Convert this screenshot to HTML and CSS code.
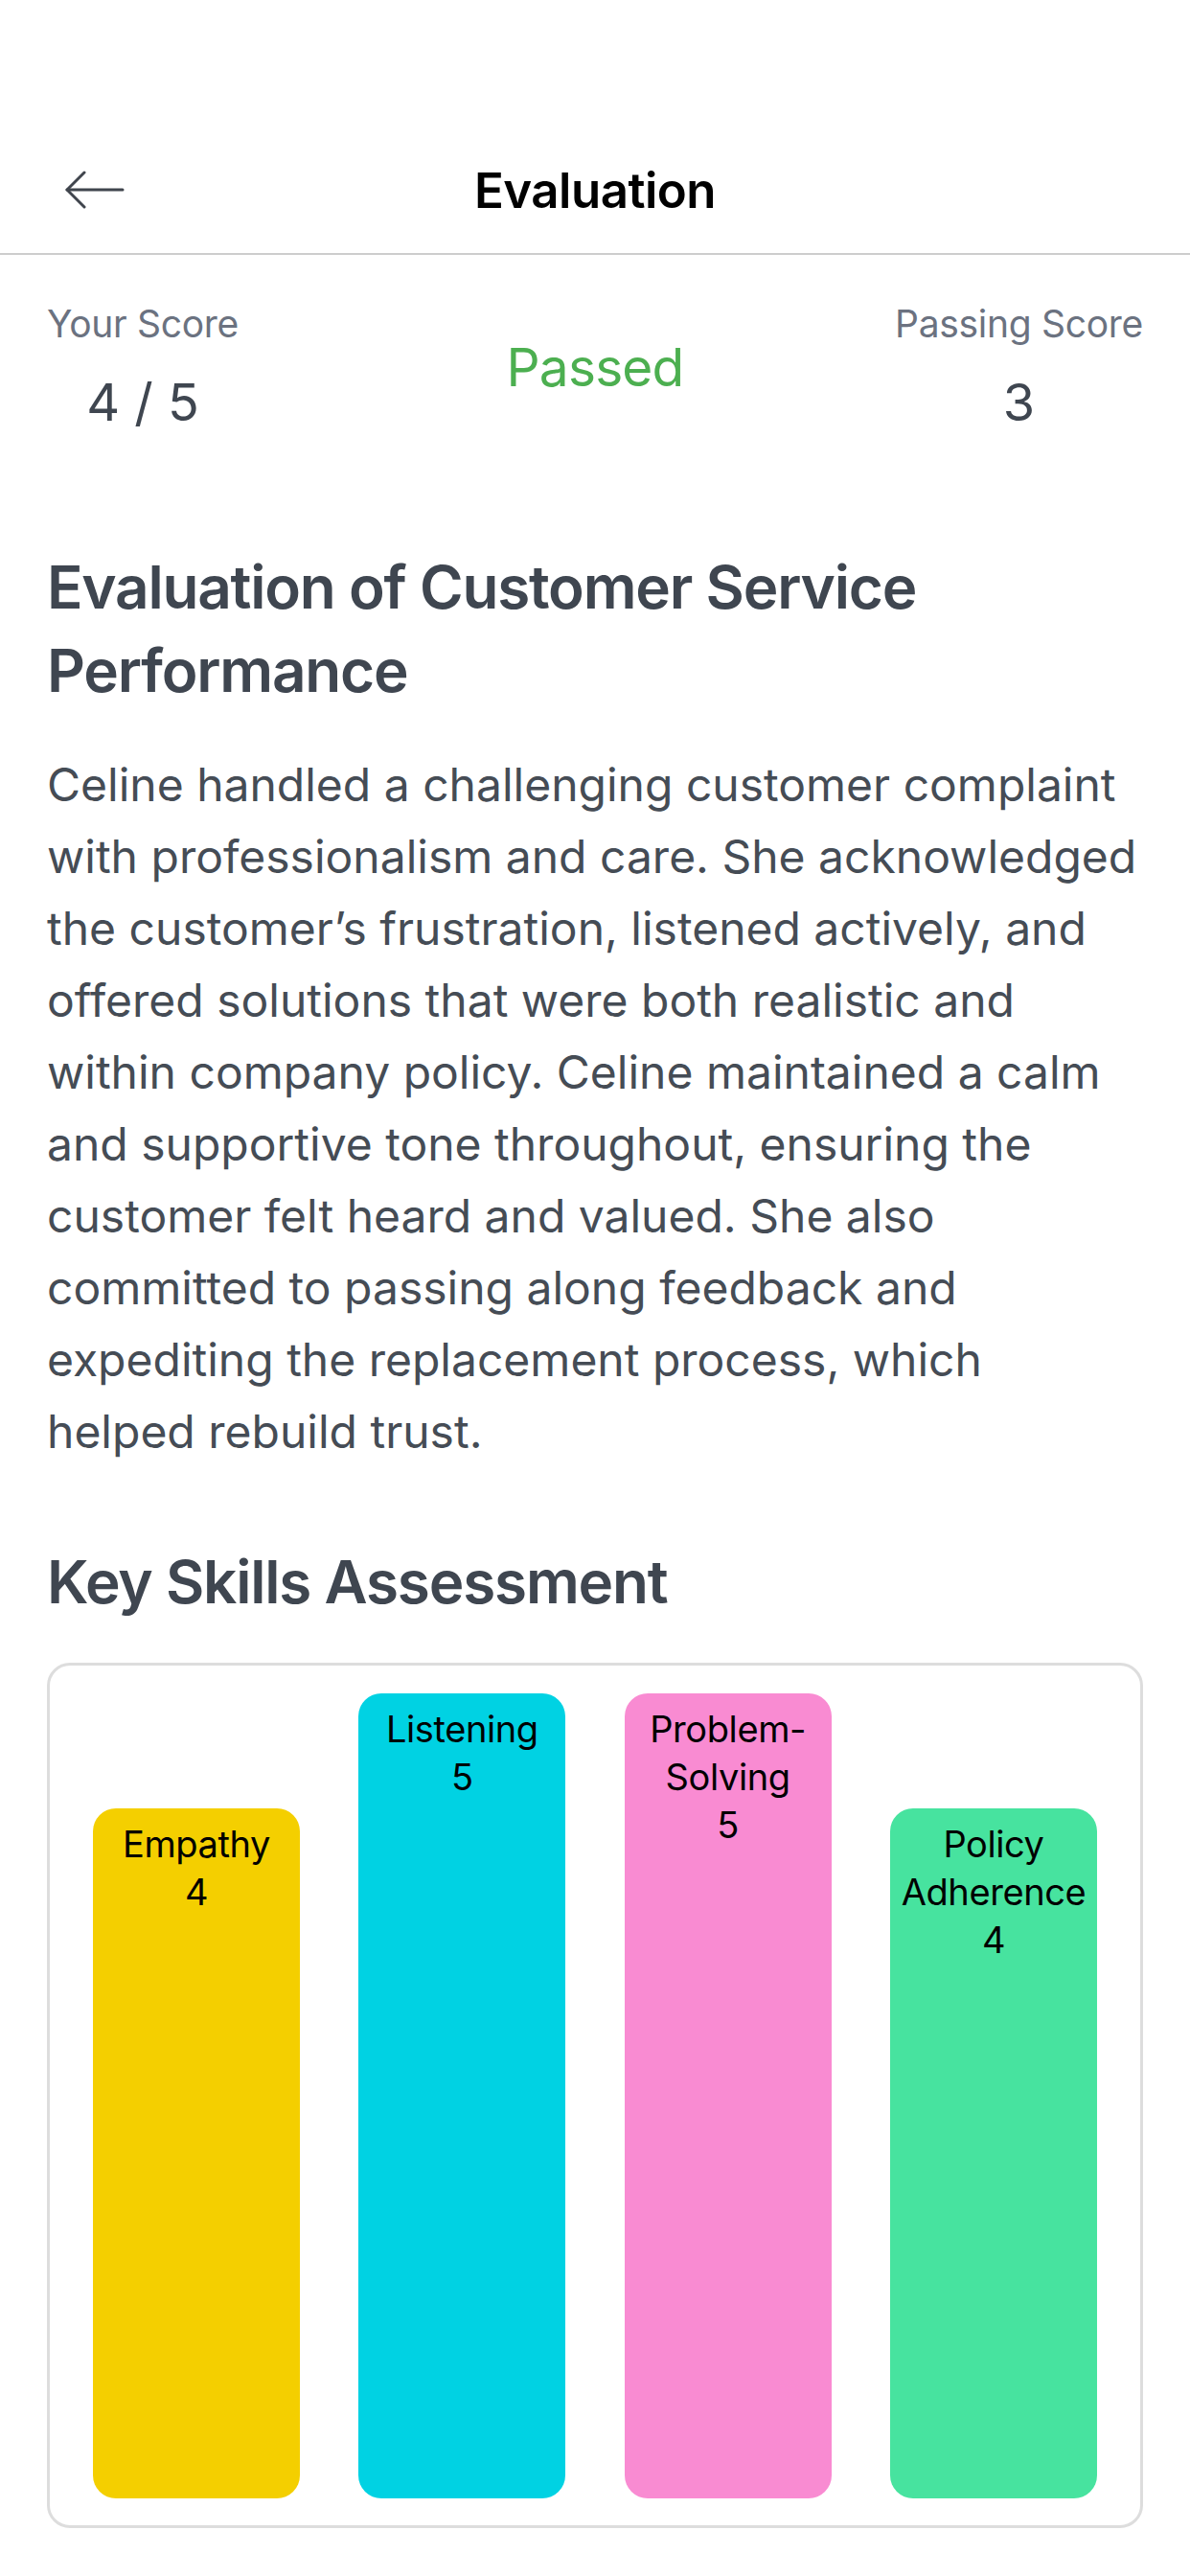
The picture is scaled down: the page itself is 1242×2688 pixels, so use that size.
FILE: index.html
```html
<!DOCTYPE html>
<html lang="en">
<head>
<meta charset="utf-8">
<title>Evaluation</title>
<link rel="stylesheet" href="styles.css">
</head>
<body>
<div class="screen">
  <header class="nav">
    <button class="back" aria-label="Back">
      <svg width="64" height="40" viewBox="0 0 64 40" fill="none" stroke="#40454d" stroke-width="3" stroke-linecap="round" stroke-linejoin="round">
        <path d="M62 20 H4"/>
        <path d="M22 2 L4 20 L22 38"/>
      </svg>
    </button>
    <h1 class="nav-title">Evaluation</h1>
  </header>

  <main class="content">
    <section class="scores">
      <div class="score-col score-left">
        <div class="score-label">Your Score</div>
        <div class="score-value">4 / 5</div>
      </div>
      <div class="status">Passed</div>
      <div class="score-col score-right">
        <div class="score-label">Passing Score</div>
        <div class="score-value">3</div>
      </div>
    </section>

    <h2 class="section-title">Evaluation of Customer Service Performance</h2>
    <p class="summary">Celine handled a challenging customer complaint with professionalism and care. She acknowledged the customer’s frustration, listened actively, and offered solutions that were both realistic and within company policy. Celine maintained a calm and supportive tone throughout, ensuring the customer felt heard and valued. She also committed to passing along feedback and expediting the replacement process, which helped rebuild trust.</p>

    <h2 class="section-title skills-title">Key Skills Assessment</h2>
    <div class="chart">
      <div class="bar bar-yellow" style="height: 720px;">
        <span class="bar-name">Empathy</span>
        <span class="bar-value">4</span>
      </div>
      <div class="bar bar-cyan" style="height: 840px;">
        <span class="bar-name">Listening</span>
        <span class="bar-value">5</span>
      </div>
      <div class="bar bar-pink" style="height: 840px;">
        <span class="bar-name">Problem-Solving</span>
        <span class="bar-value">5</span>
      </div>
      <div class="bar bar-green" style="height: 720px;">
        <span class="bar-name">Policy Adherence</span>
        <span class="bar-value">4</span>
      </div>
    </div>
  </main>
</div>
</body>
</html>
```
FILE: styles.css
```css
* {
  box-sizing: border-box;
}

html, body {
  margin: 0;
  padding: 0;
  background: #ffffff;
}

body {
  font-family: Inter, "Noto Sans", "Liberation Sans", sans-serif;
  color: #3f4650;
}

.screen {
  width: 1242px;
  min-height: 2688px;
  background: #ffffff;
  padding-top: 132px;
}

.nav {
  height: 134px;
  display: flex;
  align-items: center;
  justify-content: center;
  position: relative;
  border-bottom: 2px solid #cdcdcd;
}

.back {
  position: absolute;
  left: 66px;
  top: 46px;
  padding: 0;
  margin: 0;
  border: 0;
  background: none;
  display: flex;
}

.nav-title {
  margin: 0;
  font-size: 51px;
  font-weight: 600;
  color: #000000;
  letter-spacing: -0.5px;
  line-height: 1;
}

.content {
  padding: 0 49px;
}

.scores {
  display: grid;
  grid-template-columns: 1fr auto 1fr;
  align-items: center;
  padding-top: 48px;
}

.score-col {
  display: flex;
  flex-direction: column;
  align-items: center;
  gap: 26px;
}

.score-left {
  justify-self: start;
}

.score-right {
  justify-self: end;
}

.score-label {
  font-size: 39px;
  line-height: 47px;
  color: #6b7280;
  letter-spacing: -0.3px;
}

.score-value {
  font-size: 54px;
  line-height: 65px;
  color: #3f4650;
}

.status {
  font-size: 55px;
  line-height: 68px;
  color: #4caf50;
  letter-spacing: -0.8px;
}

.section-title {
  margin: 117px 0 0;
  font-size: 62px;
  line-height: 87px;
  font-weight: 600;
  color: #3f4650;
  letter-spacing: -1.2px;
}

.summary {
  margin: 38px 0 0;
  font-size: 48px;
  line-height: 75px;
  color: #454c55;
  letter-spacing: 0;
}

.skills-title {
  margin-top: 76px;
}

.chart {
  margin-top: 41px;
  height: 903px;
  border: 3px solid #dddddd;
  border-radius: 24px;
  padding: 29px 45px 28px;
  display: flex;
  justify-content: space-between;
  align-items: flex-end;
}

.bar {
  width: 216px;
  border-radius: 24px;
  padding: 12px 6px 0;
  display: flex;
  flex-direction: column;
  align-items: center;
  text-align: center;
  font-size: 38px;
  line-height: 50px;
  letter-spacing: -0.4px;
  color: #000000;
}

.bar-yellow { background: #f4cf00; }
.bar-cyan { background: #00d2e3; }
.bar-pink { background: #f98bd2; }
.bar-green { background: #47e39f; }
```
